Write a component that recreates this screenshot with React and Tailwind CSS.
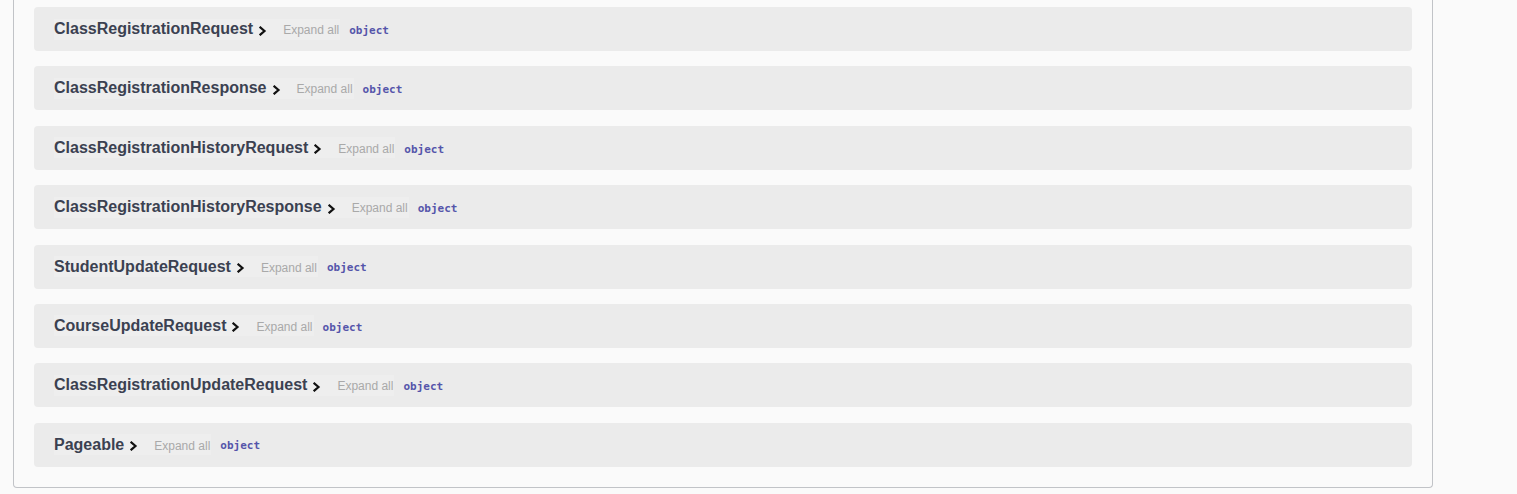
import React from 'react'

const MODELS = [
  'ClassRegistrationRequest',
  'ClassRegistrationResponse',
  'ClassRegistrationHistoryRequest',
  'ClassRegistrationHistoryResponse',
  'StudentUpdateRequest',
  'CourseUpdateRequest',
  'ClassRegistrationUpdateRequest',
  'Pageable',
]

function Chevron() {
  return (
    <svg className="ml-[6px] mt-[3px] h-[10px] w-[8px]" viewBox="0 0 8 10" fill="none">
      <path d="M1.5 1.5L5.5 5L1.5 8.5" stroke="#111" strokeWidth={2.2} strokeLinecap="square" />
    </svg>
  )
}

function ModelRow({ name }) {
  return (
    <div className="flex h-[44px] items-center rounded bg-[#ebebeb] pl-5">
      <button type="button" className="flex h-[21px] items-center bg-[#eeeeee] pr-[10px]">
        <span className="text-[16px] font-bold text-[#3b4151]">{name}</span>
        <Chevron />
      </button>
      <button type="button" className="h-[21px] bg-[#eeeeee] pl-[6px] pr-[1px] pt-[2px] text-[12px] text-[#a9a9a9]">
        Expand all
      </button>
      <span className="ml-[9px] pt-[4px] font-['DejaVu_Sans_Mono',monospace] text-[11px] font-semibold text-[#55a]">
        object
      </span>
    </div>
  )
}

export default function App() {
  return (
    <div className="min-h-[494px] bg-[#fafafa] pl-[13px] font-['Liberation_Sans',Arial,sans-serif]">
      <section className="w-[1420px] rounded-b border border-t-0 border-[#c1c3c7] pb-[20px] pt-[7px]">
        <div className="flex flex-col gap-[15.4px] px-5">
          {MODELS.map((m) => (
            <ModelRow key={m} name={m} />
          ))}
        </div>
      </section>
    </div>
  )
}
